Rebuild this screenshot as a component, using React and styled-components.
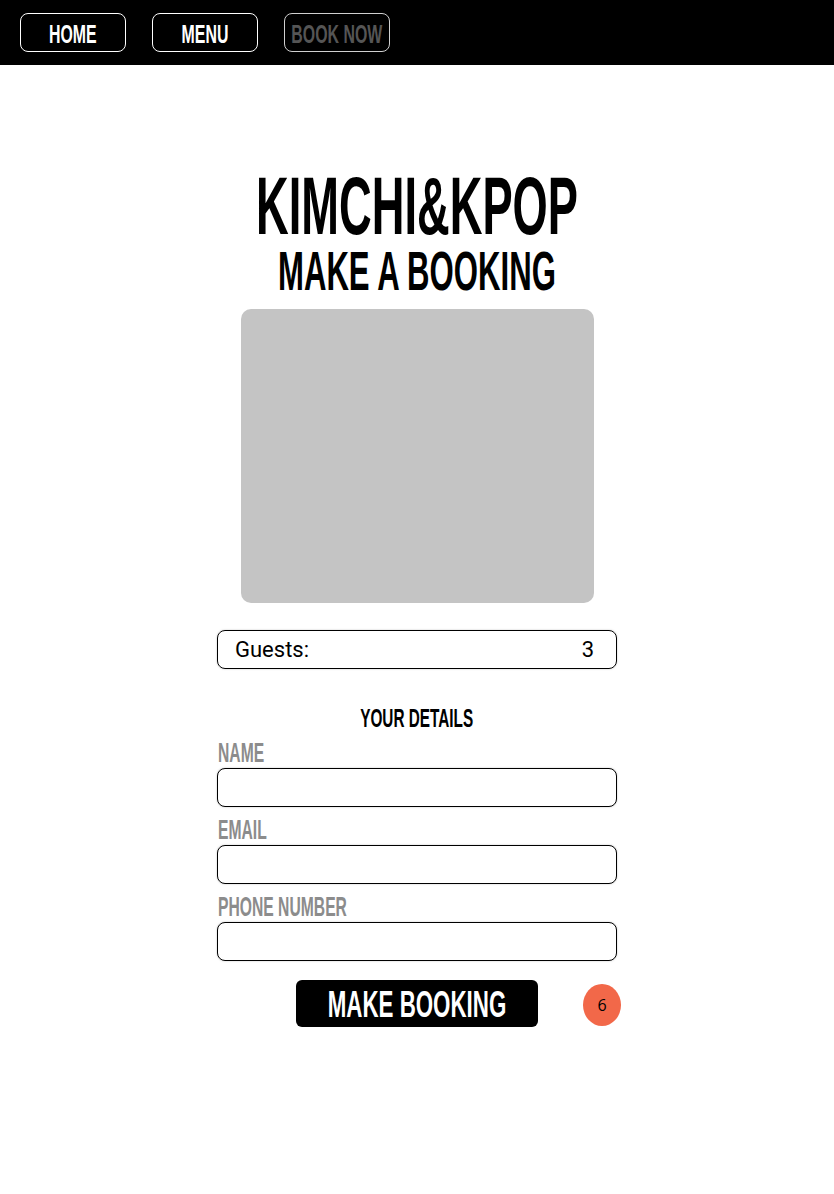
import styled, { createGlobalStyle } from "styled-components";

const GlobalStyle = createGlobalStyle`
  body {
    margin: 0;
    background: #fff;
    font-family: "Liberation Sans", Arial, sans-serif;
  }
`;

// condensed headline look: Oswald is not installed, so squeeze a bold sans
const Narrow = styled.span`
  display: inline-block;
  white-space: nowrap;
  transform: scaleX(${(p) => p.$s || 0.56});
  transform-origin: ${(p) => p.$origin || "center"};
`;

const NavBar = styled.nav`
  background: #000;
  height: 65px;
  box-sizing: border-box;
  padding: 13px 20px;
  display: flex;
  gap: 26px;
`;

const NavButton = styled.a`
  width: 106px;
  height: 39px;
  box-sizing: border-box;
  padding-top: 4px;
  border: 1px solid ${(p) => (p.$muted ? "#d0d0d0" : "#fff")};
  border-radius: 8px;
  display: flex;
  align-items: center;
  justify-content: center;
  color: ${(p) => (p.$muted ? "#555" : "#fff")};
  font-size: 26.5px;
  font-weight: 700;
  line-height: 1;
  text-decoration: none;
`;

const Main = styled.main`
  display: flex;
  flex-direction: column;
  align-items: center;
  padding: 104px 0 160px;
`;

const Title = styled.h1`
  margin: 0;
  font-size: 81px;
  line-height: 74px;
  font-weight: 700;
  color: #000;
`;

const Subtitle = styled.h2`
  margin: 0;
  font-size: 56px;
  line-height: 56px;
  font-weight: 700;
  color: #000;
`;

const Photo = styled.div`
  width: 353px;
  height: 294px;
  margin-top: 10px;
  background: #c4c4c4;
  border-radius: 10px;
`;

const Form = styled.form`
  width: 400px;
  margin-top: 27px;
  display: flex;
  flex-direction: column;
`;

const GuestsBox = styled.div`
  height: 39px;
  box-sizing: border-box;
  padding: 0 22px 0 17px;
  border: 1px solid #000;
  border-radius: 8px;
  box-shadow: 0 0 2px rgba(0, 0, 0, 0.25);
  display: flex;
  align-items: center;
  justify-content: space-between;
  font-family: Roboto, "Liberation Sans", sans-serif;
  font-size: 22px;
  color: #000;
`;

const SectionTitle = styled.h3`
  margin: 34px 0 0;
  text-align: center;
  font-size: 26.5px;
  line-height: 30px;
  font-weight: 700;
`;

const Fields = styled.div`
  margin-top: 5px;
  display: flex;
  flex-direction: column;
  gap: 8px;
`;

const Field = styled.label`
  display: flex;
  flex-direction: column;
`;

const LabelText = styled.span`
  padding-left: 1px;
  font-size: 28px;
  line-height: 30px;
  font-weight: 700;
  color: #8c8c8c;
`;

const Input = styled.input`
  height: 39px;
  box-sizing: border-box;
  border: 1px solid #000;
  border-radius: 8px;
  box-shadow: 0 0 2px rgba(0, 0, 0, 0.25);
  padding: 0 12px;
  font-size: 18px;
  outline: none;
`;

const SubmitRow = styled.div`
  position: relative;
  margin-top: 19px;
  display: flex;
  justify-content: center;
`;

const SubmitButton = styled.button`
  width: 242px;
  height: 47px;
  padding: 3px 0 0;
  border: none;
  border-radius: 6px;
  background: #000;
  color: #fff;
  font-family: inherit;
  font-size: 36px;
  font-weight: 700;
  line-height: 1;
  display: flex;
  align-items: center;
  justify-content: center;
  overflow: visible;
`;

const Badge = styled.span`
  position: absolute;
  left: 366px;
  top: 4px;
  width: 38px;
  height: 42px;
  border-radius: 50%;
  background: #f26849;
  display: flex;
  align-items: center;
  justify-content: center;
  font-family: "Open Sans", sans-serif;
  font-size: 16px;
  color: #000;
`;

const navItems = [
  { label: "HOME" },
  { label: "MENU" },
  { label: "BOOK NOW", muted: true },
];

const fields = ["NAME", "EMAIL", "PHONE NUMBER"];

const App = () => {
  return (
    <>
      <GlobalStyle />
      <NavBar>
        {navItems.map((item) => (
          <NavButton key={item.label} href="#" $muted={item.muted}>
            <Narrow $s={0.6}>{item.label}</Narrow>
          </NavButton>
        ))}
      </NavBar>
      <Main>
        <Title>
          <Narrow $s={0.559}>KIMCHI&amp;KPOP</Narrow>
        </Title>
        <Subtitle>
          <Narrow $s={0.556}>MAKE A BOOKING</Narrow>
        </Subtitle>
        <Photo />
        <Form onSubmit={(e) => e.preventDefault()}>
          <GuestsBox>
            <span>Guests:</span>
            <span>3</span>
          </GuestsBox>
          <SectionTitle>
            <Narrow $s={0.578}>YOUR DETAILS</Narrow>
          </SectionTitle>
          <Fields>
            {fields.map((name) => (
              <Field key={name}>
                <LabelText>
                  <Narrow $s={0.56} $origin="left">{name}</Narrow>
                </LabelText>
                <Input type="text" />
              </Field>
            ))}
          </Fields>
          <SubmitRow>
            <SubmitButton type="submit">
              <Narrow $s={0.62}>MAKE BOOKING</Narrow>
            </SubmitButton>
            <Badge>6</Badge>
          </SubmitRow>
        </Form>
      </Main>
    </>
  );
};

export default App;
